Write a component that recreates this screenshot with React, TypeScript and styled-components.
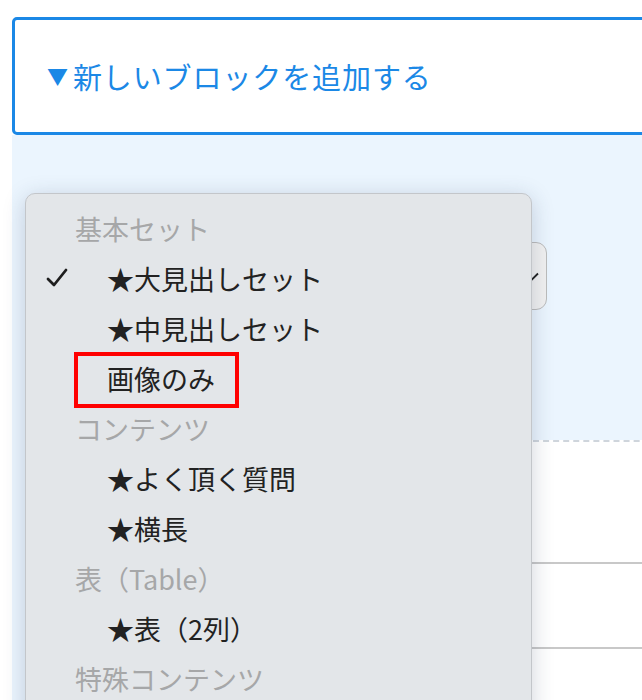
import styled, { createGlobalStyle } from 'styled-components';

const GlobalStyle = createGlobalStyle`
    html, body {
        margin: 0;
        padding: 0;
        background: #ffffff;
        overflow: hidden;
    }
    body {
        font-family: "Noto Sans CJK JP", "Noto Sans", sans-serif;
    }
`;

type MenuEntry =
    | { kind: 'group'; label: string }
    | { kind: 'item'; label: string; checked?: boolean; marked?: boolean };

const entries: MenuEntry[] = [
    { kind: 'group', label: '基本セット' },
    { kind: 'item', label: '★大見出しセット', checked: true },
    { kind: 'item', label: '★中見出しセット' },
    { kind: 'item', label: '画像のみ', marked: true },
    { kind: 'group', label: 'コンテンツ' },
    { kind: 'item', label: '★よく頂く質問' },
    { kind: 'item', label: '★横長' },
    { kind: 'group', label: '表（Table）' },
    { kind: 'item', label: '★表（2列）' },
    { kind: 'group', label: '特殊コンテンツ' },
];

export default function App() {
    return (
        <>
            <GlobalStyle />
            <Page>
                <Editor>
                    <AddBlockBar>
                        <Arrow>▼</Arrow>
                        <span>新しいブロックを追加する</span>
                    </AddBlockBar>
                    <BlockArea>
                        <SettingsPanel>
                            <SelectField>
                                <svg width="14" height="9" viewBox="0 0 14 9">
                                    <polyline points="1,1.5 7,7.5 13,1.5" fill="none" stroke="#222" strokeWidth="1.8" />
                                </svg>
                            </SelectField>
                        </SettingsPanel>
                        <ContentList>
                            <BlockRow $height={122} />
                            <BlockRow $height={85} />
                            <BlockRow $height={120} />
                        </ContentList>
                    </BlockArea>
                </Editor>

                <PopupMenu>
                    {entries.map((entry, i) =>
                        entry.kind === 'group' ? (
                            <GroupLabel key={i}>{entry.label}</GroupLabel>
                        ) : (
                            <MenuItem key={i} $marked={entry.marked}>
                                <CheckSlot>
                                    {entry.checked && (
                                        <svg width="22" height="20" viewBox="0 0 22 20">
                                            <polyline points="2,11 8,17 20,2" fill="none" stroke="#1e1e1e" strokeWidth="2.8" strokeLinecap="round" strokeLinejoin="round" />
                                        </svg>
                                    )}
                                </CheckSlot>
                                <span>{entry.label}</span>
                            </MenuItem>
                        )
                    )}
                </PopupMenu>
            </Page>
        </>
    );
}

const Page = styled.div`
    position: relative;
    width: 700px;
    height: 700px;
    padding-top: 17px;
    box-sizing: border-box;
`;

const Editor = styled.div`
    margin-left: 12px;
    display: flex;
    flex-direction: column;
`;

const AddBlockBar = styled.div`
    height: 118px;
    box-sizing: border-box;
    border: 3px solid #1b88e6;
    border-radius: 5px;
    display: flex;
    align-items: center;
    padding-left: 32px;
    color: #1b88e6;
    font-size: 29px;
    letter-spacing: 0.9px;
`;

const Arrow = styled.span`
    font-size: 21px;
    margin-right: 4px;
    position: relative;
    top: -1px;
`;

const BlockArea = styled.div`
    background: #ebf5fe;
    display: flex;
    flex-direction: column;
    height: 600px;
`;

const SettingsPanel = styled.div`
    height: 305px;
    flex-shrink: 0;
    box-sizing: border-box;
    padding-top: 107px;
    padding-left: 40px;
`;

const SelectField = styled.div`
    width: 495px;
    height: 68px;
    box-sizing: border-box;
    border: 1.5px solid #bcbcbc;
    border-radius: 11px;
    background: #f1f1f1;
    display: flex;
    align-items: center;
    justify-content: flex-end;
    padding-right: 7px;
`;

const ContentList = styled.div`
    margin-left: 28px;
    flex: 1;
    background: #ffffff;
    border-top: 2px dashed #cfd5dc;
    display: flex;
    flex-direction: column;
`;

const BlockRow = styled.div<{ $height: number }>`
    height: ${(p) => p.$height}px;
    flex-shrink: 0;
    box-sizing: border-box;
    border-bottom: 2px solid #c8c8c8;
`;

const PopupMenu = styled.div`
    position: absolute;
    top: 193px;
    left: 25px;
    width: 507px;
    height: 560px;
    box-sizing: border-box;
    padding-top: 9px;
    background: #e3e6e9;
    border: 1px solid #c3c6ca;
    border-radius: 10px;
    box-shadow: 0 4px 22px rgba(40, 60, 90, 0.22);
    display: flex;
    flex-direction: column;
`;

const GroupLabel = styled.div`
    height: 50px;
    flex-shrink: 0;
    display: flex;
    align-items: center;
    padding-left: 49px;
    font-size: 27px;
    color: #a6a7a8;
`;

const MenuItem = styled.div<{ $marked?: boolean }>`
    position: relative;
    height: 50px;
    flex-shrink: 0;
    display: flex;
    align-items: center;
    padding-left: 20px;
    font-size: 27px;
    color: #222222;

    ${(p) =>
        p.$marked &&
        `
        &::after {
            content: '';
            position: absolute;
            left: 48px;
            top: -1px;
            width: 165px;
            height: 56px;
            box-sizing: border-box;
            border: 4px solid #ff0000;
        }
    `}
`;

const CheckSlot = styled.span`
    width: 61px;
    display: flex;
    align-items: center;
`;
